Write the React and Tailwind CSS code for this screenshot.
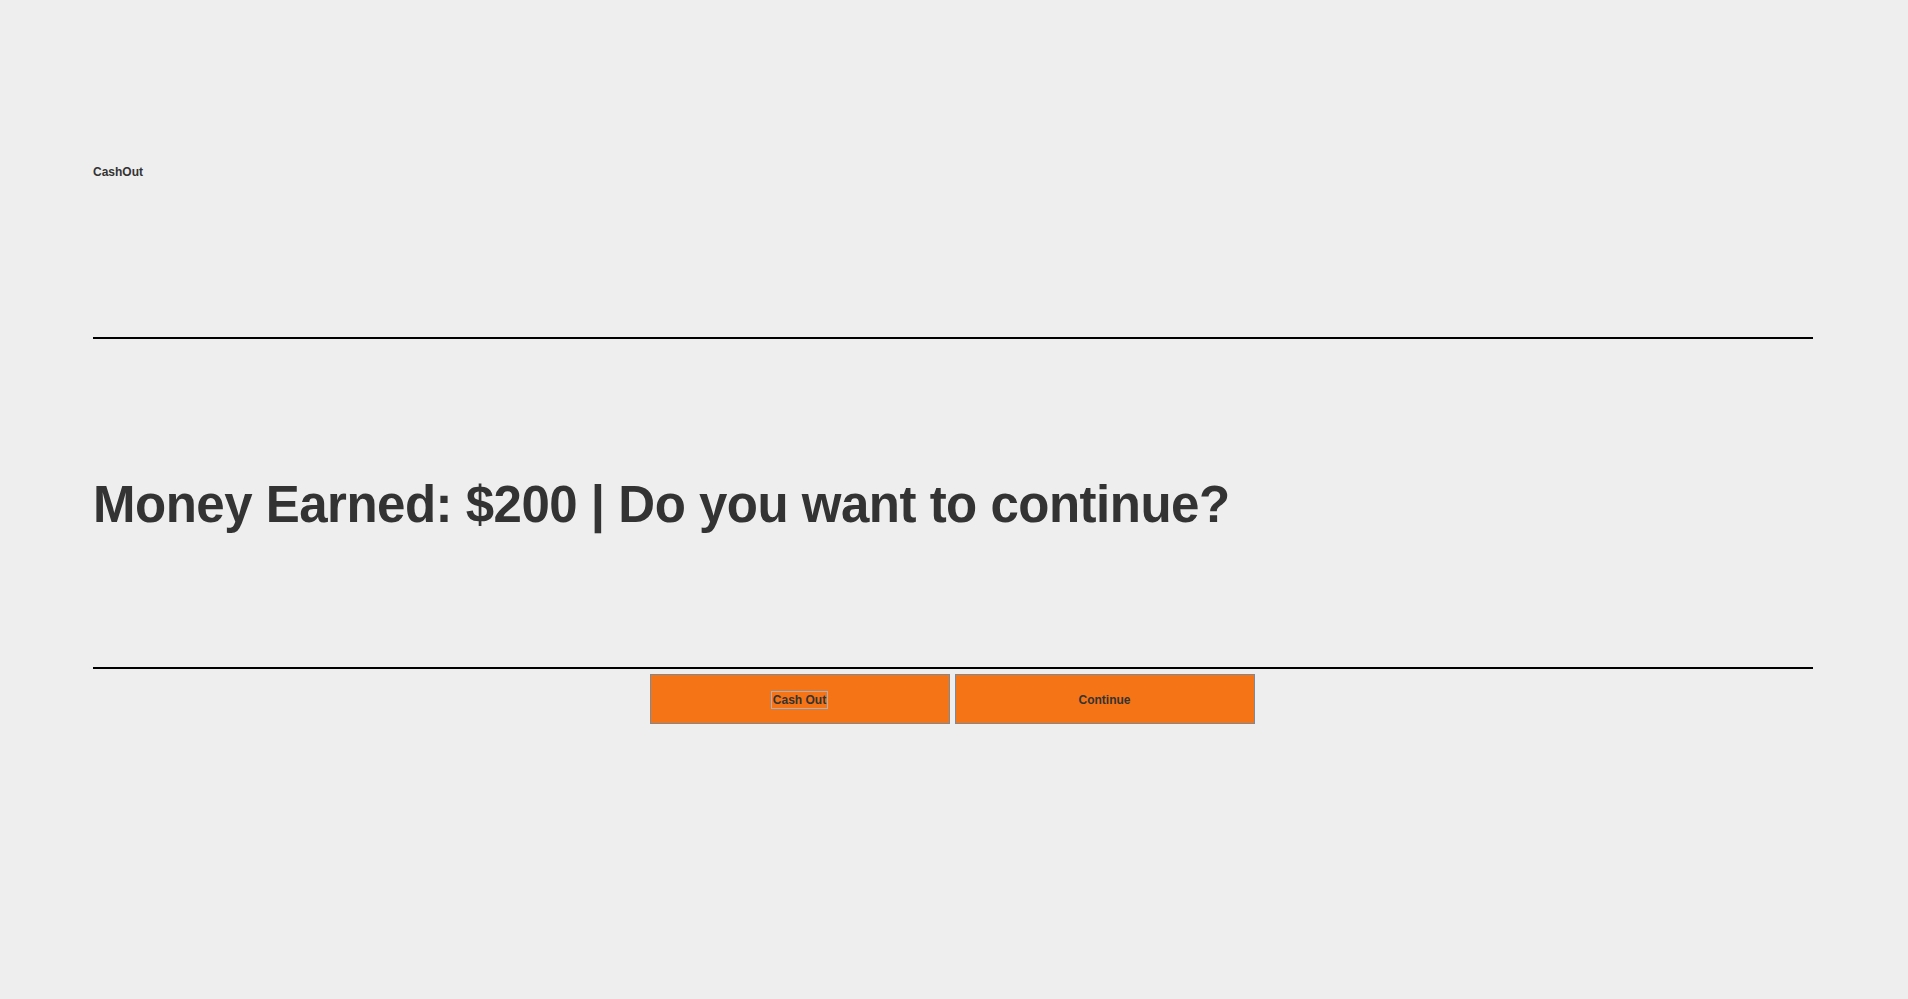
export default function App() {
  return (
    <div
      className="w-[1908px] h-[999px] bg-[#eeeeee] text-[#333333] flex flex-col pl-[93px] pr-[95px]"
      style={{ fontFamily: '"Liberation Sans", Arial, sans-serif' }}
    >
      <div className="h-[165px]" />
      <div className="h-[14px] text-[12px] leading-[14px] font-bold">CashOut</div>
      <div className="h-[158px]" />
      <div className="h-[2px] bg-black" />
      <div className="h-[140px]" />
      <h1 className="h-[51px] text-[51px] leading-[51px] font-bold tracking-[-0.5px] whitespace-nowrap">
        Money Earned: $200 | Do you want to continue?
      </h1>
      <div className="h-[137px]" />
      <div className="h-[2px] bg-black" />
      <div className="h-[5px]" />
      <div className="flex justify-center gap-[5px] pr-[2px]">
        <button className="w-[300px] h-[50px] bg-[#f47416] border border-[#7a8a9a] flex items-center justify-center pt-[2px] text-[12px] font-bold text-[#333333]">
          <span className="border border-[#9db4cc] px-[1px] leading-[16px]">Cash Out</span>
        </button>
        <button className="w-[300px] h-[50px] bg-[#f47416] border border-[#7a8a9a] flex items-center justify-center pt-[2px] text-[12px] font-bold text-[#333333]">
          <span className="px-[2px] leading-[18px]">Continue</span>
        </button>
      </div>
    </div>
  );
}
